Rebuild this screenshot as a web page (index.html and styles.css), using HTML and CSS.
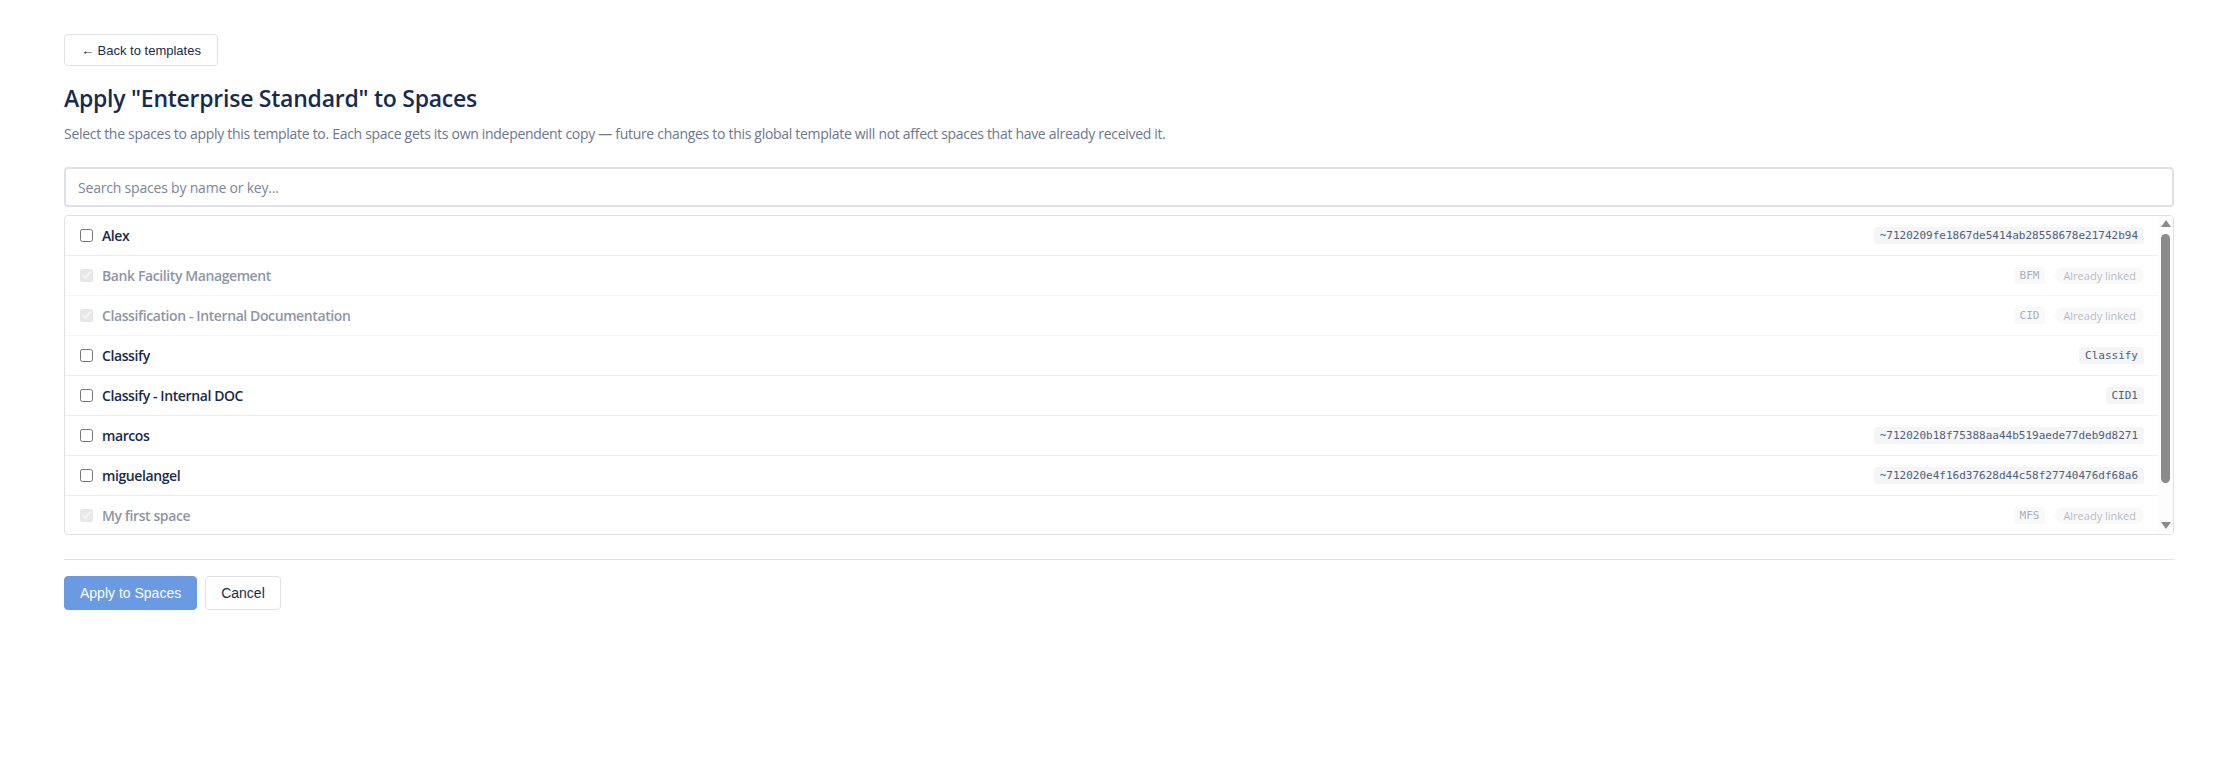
FILE: index.html
```html
<!DOCTYPE html>
<html lang="en">
<head>
  <meta charset="UTF-8">
  <meta name="viewport" content="width=device-width, initial-scale=1.0">
  <title>Apply template to spaces</title>
  <link rel="stylesheet" href="styles.css">
</head>
<body>

  <div class="page">
    <button class="back-btn" type="button">&larr; Back to templates</button>

    <h1 class="title">Apply "Enterprise Standard" to Spaces</h1>
    <p class="intro">Select the spaces to apply this template to. Each space gets its own independent copy &mdash; future changes to this global template will not affect spaces that have already received it.</p>

    <input class="search" type="text" placeholder="Search spaces by name or key...">

    <div class="space-list">
      <div class="space-rows">
        <label class="space-row">
          <input type="checkbox">
          <span class="space-name">Alex</span>
          <span class="space-meta"><code class="key">~7120209fe1867de5414ab28558678e21742b94</code></span>
        </label>
        <label class="space-row linked">
          <input type="checkbox" checked disabled>
          <span class="space-name">Bank Facility Management</span>
          <span class="space-meta"><code class="key">BFM</code><span class="pill">Already linked</span></span>
        </label>
        <label class="space-row linked">
          <input type="checkbox" checked disabled>
          <span class="space-name">Classification - Internal Documentation</span>
          <span class="space-meta"><code class="key">CID</code><span class="pill">Already linked</span></span>
        </label>
        <label class="space-row">
          <input type="checkbox">
          <span class="space-name">Classify</span>
          <span class="space-meta"><code class="key">Classify</code></span>
        </label>
        <label class="space-row">
          <input type="checkbox">
          <span class="space-name">Classify - Internal DOC</span>
          <span class="space-meta"><code class="key">CID1</code></span>
        </label>
        <label class="space-row">
          <input type="checkbox">
          <span class="space-name">marcos</span>
          <span class="space-meta"><code class="key">~712020b18f75388aa44b519aede77deb9d8271</code></span>
        </label>
        <label class="space-row">
          <input type="checkbox">
          <span class="space-name">miguelangel</span>
          <span class="space-meta"><code class="key">~712020e4f16d37628d44c58f27740476df68a6</code></span>
        </label>
        <label class="space-row linked">
          <input type="checkbox" checked disabled>
          <span class="space-name">My first space</span>
          <span class="space-meta"><code class="key">MFS</code><span class="pill">Already linked</span></span>
        </label>
      </div>
      <div class="scrollbar" aria-hidden="true">
        <span class="sb-arrow up"></span>
        <div class="sb-track"><span class="sb-thumb"></span></div>
        <span class="sb-arrow down"></span>
      </div>
    </div>

    <div class="actions">
      <button class="btn btn-primary" type="button" disabled>Apply to Spaces</button>
      <button class="btn" type="button">Cancel</button>
    </div>
  </div>

</body>
</html>
```

FILE: styles.css
```css
body {
  margin: 0;
  font-family: "Open Sans", "Noto Sans", sans-serif;
  color: #172b4d;
  background-color: #fff;
}

.page {
  padding: 34px 64px;
}

button {
  font-family: "Liberation Sans", Arial, sans-serif;
  font-size: 14px;
  cursor: pointer;
}

.back-btn {
  height: 32px;
  padding: 0 16px;
  font-size: 13px;
  background: #fff;
  color: #172b4d;
  border: 1px solid #dfe1e6;
  border-radius: 4px;
}

.title {
  font-size: 23px;
  font-weight: 600;
  line-height: 31px;
  letter-spacing: -0.25px;
  margin: 17px 0 0;
}

.intro {
  font-size: 14px;
  line-height: 20px;
  letter-spacing: -0.3px;
  color: #6b778c;
  margin: 10px 0 0;
}

.search {
  display: block;
  box-sizing: border-box;
  width: 100%;
  height: 40px;
  margin-top: 23px;
  padding: 0 12px;
  font-family: inherit;
  font-size: 14px;
  letter-spacing: -0.2px;
  color: #172b4d;
  border: 2px solid #dfe1e6;
  border-radius: 4px;
  outline: none;
}

.search::placeholder {
  color: #7a869a;
}

.space-list {
  display: flex;
  box-sizing: border-box;
  height: 320px;
  margin-top: 8px;
  border: 1px solid #dfe1e6;
  border-radius: 4px;
  overflow: hidden;
}

.space-rows {
  flex: 1;
  overflow: hidden;
}

/* fake classic scrollbar, the list holds more rows than it shows */
.scrollbar {
  width: 15px;
  display: flex;
  flex-direction: column;
  align-items: center;
  padding: 4px 0 5px;
  box-sizing: border-box;
  background: #fdfdfd;
}

.sb-arrow {
  width: 0;
  height: 0;
  border-left: 5px solid transparent;
  border-right: 5px solid transparent;
}

.sb-arrow.up {
  border-bottom: 7px solid #8b8b8b;
}

.sb-arrow.down {
  border-top: 7px solid #8b8b8b;
}

.sb-track {
  flex: 1;
  width: 100%;
  display: flex;
  justify-content: center;
  padding-top: 7px;
}

.sb-thumb {
  width: 9px;
  height: 249px;
  background: #8b8b8b;
  border-radius: 5px;
}

.space-row {
  display: flex;
  align-items: center;
  gap: 9px;
  height: 40px;
  box-sizing: border-box;
  padding: 0 14px 0 15px;
  border-bottom: 1px solid #ebecf0;
  cursor: pointer;
}

.space-row input {
  margin: 0;
  width: 13px;
  height: 13px;
}

.space-name {
  font-size: 14px;
  font-weight: 600;
  letter-spacing: -0.4px;
}

.space-row.linked {
  opacity: 0.5;
  cursor: default;
}

.space-meta {
  margin-left: auto;
  display: flex;
  align-items: center;
  gap: 10px;
}

.key {
  font-family: "DejaVu Sans Mono", "Liberation Mono", monospace;
  font-size: 11px;
  line-height: 17px;
  padding: 0 6px;
  color: #505f79;
  background: #f4f5f7;
  border-radius: 3px;
}

.pill {
  font-size: 11px;
  line-height: 17px;
  padding: 0 8px;
  color: #6b778c;
  background: #f4f5f7;
  border-radius: 9px;
}

.actions {
  display: flex;
  gap: 8px;
  margin-top: 24px;
  padding-top: 16px;
  border-top: 1px solid #dfe1e6;
}

.btn {
  height: 34px;
  padding: 0 15px;
  background: #fff;
  color: #172b4d;
  border: 1px solid #dfe1e6;
  border-radius: 4px;
}

.btn-primary {
  background: #0052cc;
  border-color: #0052cc;
  color: #fff;
}

.btn-primary:disabled {
  opacity: 0.58;
  cursor: not-allowed;
}
```
